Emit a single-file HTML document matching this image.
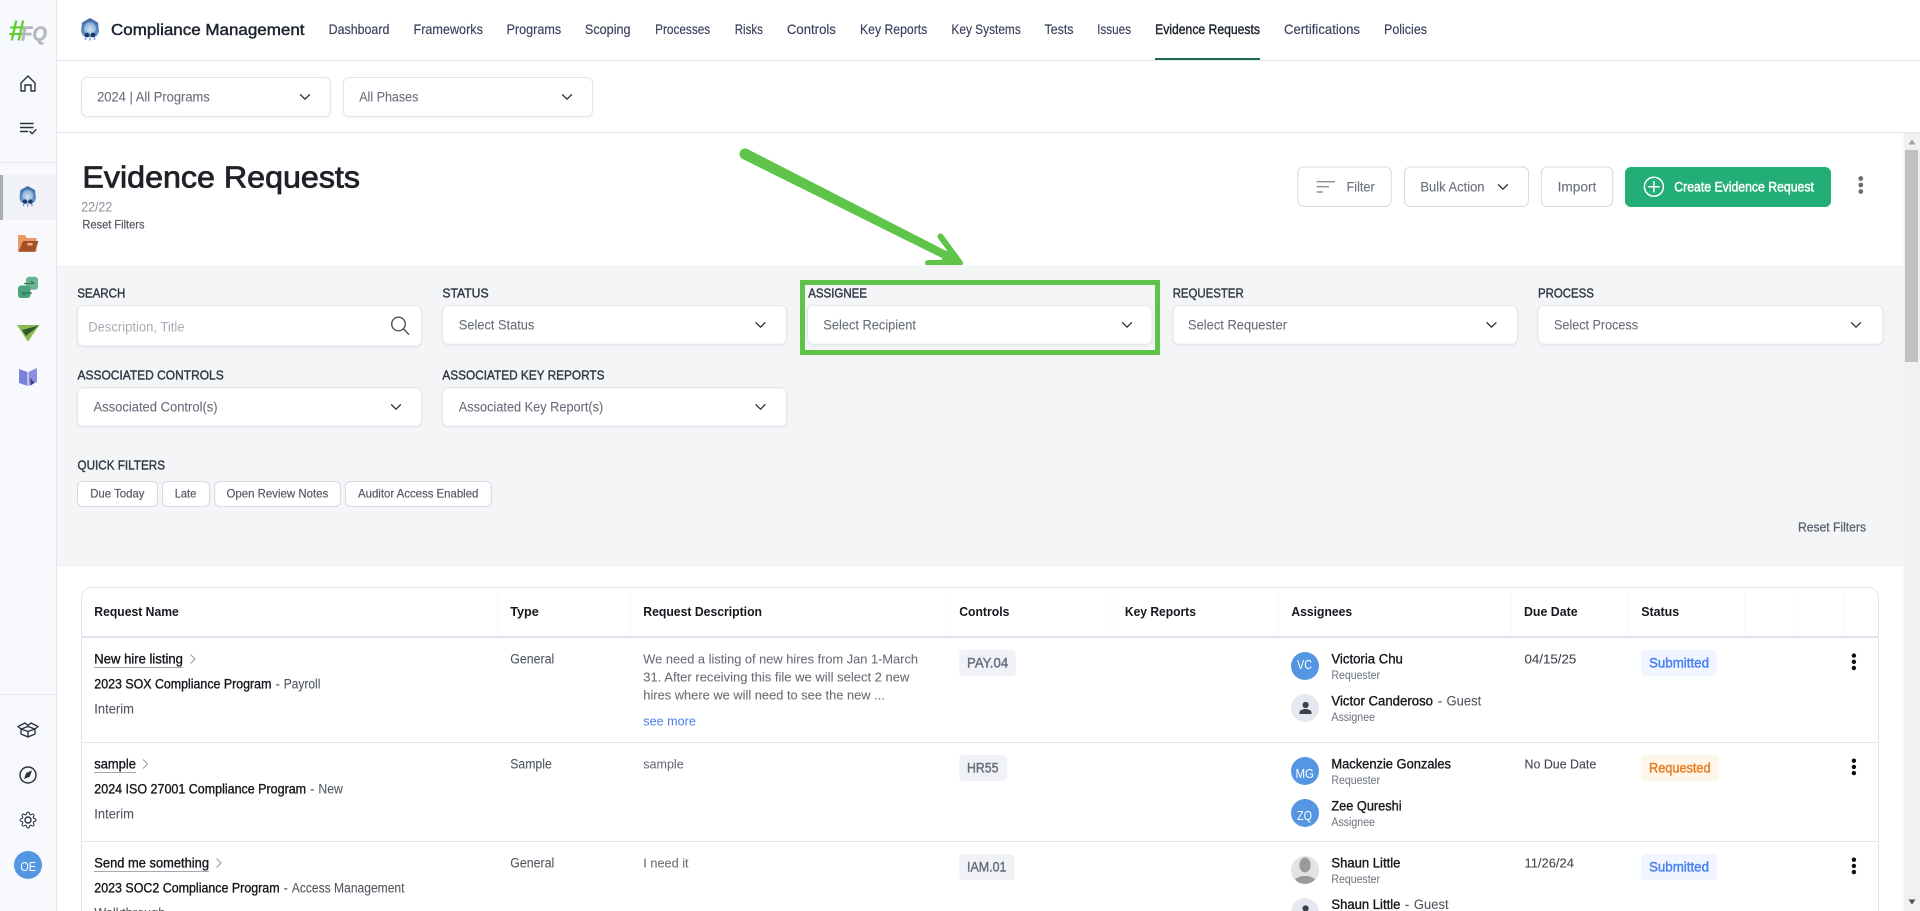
<!DOCTYPE html>
<html lang="en">
<head>
<meta charset="utf-8">
<title>Evidence Requests</title>
<style>
html,body{margin:0;padding:0;background:#fff;overflow:hidden}
svg{display:block}
text{font-family:"Liberation Sans",sans-serif;white-space:pre}
.nav{font-size:14px;fill:#3a405c;stroke:#3a405c;stroke-width:.15}
.sel{font-size:13.5px;fill:#686e7b;stroke:#686e7b;stroke-width:.1}
.lab{font-size:13px;fill:#333846;stroke:#333846;stroke-width:.4}
.chip{font-size:12px;fill:#555b67;stroke:#555b67;stroke-width:.2}
.th{font-size:13px;font-weight:bold;fill:#15181d}
.nm{font-size:13.5px;fill:#14171c;stroke:#14171c;stroke-width:.35}
.sub{font-size:13.5px;fill:#50565f;stroke:#50565f;stroke-width:.08}
.ds{font-size:13px;fill:#696e76;stroke:#696e76;stroke-width:.08}
.role{font-size:11.5px;fill:#747a84;stroke:#747a84;stroke-width:.08}
.pn{font-size:13px;fill:#3f454e;stroke:#3f454e;stroke-width:.1}
.cc{font-size:13.5px;fill:#666c7c;stroke:#666c7c;stroke-width:.4}
.av{font-size:13px;fill:#fff;text-anchor:start}
.st{font-size:13.5px;stroke-width:.45}
.box{fill:#fff;stroke:#e2e5ef;stroke-width:1;filter:drop-shadow(0 1px 1px rgba(60,70,110,.07))}
.chv{fill:none;stroke:#2c303a;stroke-width:1.35;stroke-linecap:round;stroke-linejoin:round}
.ic{fill:none;stroke:#2a3040;stroke-width:1.4;stroke-linecap:round;stroke-linejoin:round}
</style>
</head>
<body>
<svg xmlns="http://www.w3.org/2000/svg" width="1920" height="911" viewBox="0 0 1920 911">
<defs>
<path id="chev" class="chv" d="M-4.5-2 0 2.5 4.5-2"/>
<linearGradient id="sh" x1="0" y1="0" x2="0" y2="1"><stop offset="0" stop-color="#3c6aa2"/><stop offset="1" stop-color="#6f9bcc"/></linearGradient>
<radialGradient id="shc" cx=".5" cy=".6" r=".6"><stop offset="0" stop-color="#d5e4f5"/><stop offset="1" stop-color="#7ea6d4"/></radialGradient>
<g id="shield">
<path d="M10 0 18 4.500 19 13Q18 19 13.500 19H6.500Q2 19 1 13L2 4.500Z" fill="url(#sh)"/>
<ellipse cx="10" cy="10.500" rx="6" ry="6.500" fill="url(#shc)"/>
<path d="M5.500 19.500v2.500M10 19.500v3M14.500 19.500v2.500" stroke="#6f9bcf" stroke-width="1.400" fill="none"/>
<circle cx="7" cy="17" r="2.400" fill="#1d3a66"/><circle cx="13" cy="17" r="2.400" fill="#1d3a66"/>
</g>
<g id="kebab"><circle cx="0" cy="0" r="2.2"/><circle cx="0" cy="6.2" r="2.2"/><circle cx="0" cy="12.4" r="2.2"/></g>
<path id="rchev" d="M-2 -4.5 2.5 0 -2 4.5" fill="none" stroke="#9a9ea6" stroke-width="1.1"/>
<clipPath id="shaunclip"><circle cx="1305" cy="870" r="14"/></clipPath>
</defs>

<!-- Page -->
<rect width="1920" height="911" fill="#fff"/>

<!-- Sidebar -->
<rect x="0" y="0" width="56" height="911" fill="#f8f9fc"/>
<rect x="56" y="0" width="1" height="911" fill="#e4e7ef"/>
<text x="8.500" y="40.700" font-size="29" font-weight="bold" font-style="italic" fill="#5fcf2f" textLength="17" lengthAdjust="spacingAndGlyphs">#</text>
<text x="21" y="40.700" font-size="20" font-weight="bold" font-style="italic" fill="#b5b8be" stroke="#b5b8be" stroke-width=".5" textLength="26" lengthAdjust="spacingAndGlyphs">FQ</text>
<path class="ic" d="M21 83 28 76 35 83V91H31V85H25V91H21Z"/>
<path class="ic" d="M20.5 123.5H33M20.5 127.5H33M20.5 131.5H27.5M30 131.5l2.2 2.2 3.8-4"/>
<rect x="0" y="162" width="56" height="1" fill="#e4e7ef"/>
<rect x="0" y="175" width="56" height="45" fill="#f0f2f8"/>
<rect x="0" y="175" width="3" height="45" fill="#a9aeba"/>
<use href="#shield" transform="translate(18.5 186) scale(.92)"/>
<path d="M18 235h7l2 3h9.5v13.7H18Z" fill="#ea9a66"/>
<path d="M23 241H38.5L35 251.7H18.5Z" fill="#a6502a"/>
<rect x="27.5" y="243" width="5" height="2.5" fill="#f0b78f"/>
<rect x="26" y="276.7" width="12" height="13" rx="3" fill="#6cb590"/>
<rect x="18" y="285.5" width="12.5" height="12.5" rx="3" fill="#4aa37a"/>
<path d="M24 283.5H34M31 281l3 2.5M22 293H32M22 293l3 2.5" stroke="#2d7a55" stroke-width="1.2" fill="none"/>
<path d="M17 325H39.3L28 341.7Z" fill="#8fb950"/>
<path d="M22 330 39 325.5 26 336Z" fill="#2a5a2e"/>
<path d="M19 369 27.5 372V386L19 383Z" fill="#7d82d8"/>
<path d="M28.5 372 37 368V382L28.5 386Z" fill="#8a8fe0"/>
<path d="M30 378l4.5 4.5-3.5 3Z" fill="#3e3f80"/>
<rect x="0" y="694" width="56" height="1" fill="#e4e7ef"/>
<path class="ic" d="M28 726.5 35 729V734L28 737 21 734V729ZM28 731.5V737M21 729 28 731.5 35 729M21 729 18 726.5 25 723 28 725.5 31 723 38 726.5 35 729"/>
<circle class="ic" cx="28" cy="775" r="8"/>
<path d="M32 770.5 29.8 776.8 24 779 26.2 773Z" fill="#2a3040"/>
<path class="ic" transform="translate(19.4 811.4) scale(.72)" stroke-width="2" d="M19.4 15a1.65 1.65 0 0 0 .33 1.82l.06.06a2 2 0 0 1 0 2.83 2 2 0 0 1-2.83 0l-.06-.06a1.65 1.65 0 0 0-1.82-.33 1.65 1.65 0 0 0-1 1.51V21a2 2 0 0 1-2 2 2 2 0 0 1-2-2v-.09A1.65 1.65 0 0 0 9 19.4a1.65 1.65 0 0 0-1.82.33l-.06.06a2 2 0 0 1-2.83 0 2 2 0 0 1 0-2.83l.06-.06a1.65 1.65 0 0 0 .33-1.82 1.65 1.65 0 0 0-1.51-1H3a2 2 0 0 1-2-2 2 2 0 0 1 2-2h.09A1.65 1.65 0 0 0 4.6 9a1.65 1.65 0 0 0-.33-1.82l-.06-.06a2 2 0 0 1 0-2.83 2 2 0 0 1 2.83 0l.06.06a1.65 1.65 0 0 0 1.82.33H9a1.65 1.65 0 0 0 1-1.51V3a2 2 0 0 1 2-2 2 2 0 0 1 2 2v.09a1.65 1.65 0 0 0 1 1.51 1.65 1.65 0 0 0 1.82-.33l.06-.06a2 2 0 0 1 2.83 0 2 2 0 0 1 0 2.83l-.06.06a1.65 1.65 0 0 0-.33 1.82V9a1.65 1.65 0 0 0 1.51 1H21a2 2 0 0 1 2 2 2 2 0 0 1-2 2h-.09a1.65 1.65 0 0 0-1.51 1z"/>
<circle class="ic" cx="28" cy="820" r="3"/>
<circle cx="28" cy="865" r="14" fill="#5596e3"/>
<text class="av" x="20.4" y="871" textLength="15.6" lengthAdjust="spacingAndGlyphs">OE</text>

<!-- Top bar -->
<rect x="57" y="60" width="1863" height="1" fill="#e4e7ef"/>
<use href="#shield" transform="translate(80 18)"/>
<text x="111" y="35" font-size="15.5" fill="#1e2430" stroke="#1e2430" stroke-width=".45" textLength="193.5" lengthAdjust="spacingAndGlyphs">Compliance Management</text>
<text class="nav" x="328.6" y="34" textLength="60.8" lengthAdjust="spacingAndGlyphs">Dashboard</text>
<text class="nav" x="413.5" y="34" textLength="69.4" lengthAdjust="spacingAndGlyphs">Frameworks</text>
<text class="nav" x="506.5" y="34" textLength="54.7" lengthAdjust="spacingAndGlyphs">Programs</text>
<text class="nav" x="584.9" y="34" textLength="45.7" lengthAdjust="spacingAndGlyphs">Scoping</text>
<text class="nav" x="655.1" y="34" textLength="55.1" lengthAdjust="spacingAndGlyphs">Processes</text>
<text class="nav" x="734.7" y="34" textLength="28.2" lengthAdjust="spacingAndGlyphs">Risks</text>
<text class="nav" x="786.9" y="34" textLength="49" lengthAdjust="spacingAndGlyphs">Controls</text>
<text class="nav" x="860" y="34" textLength="67.3" lengthAdjust="spacingAndGlyphs">Key Reports</text>
<text class="nav" x="951.4" y="34" textLength="69.4" lengthAdjust="spacingAndGlyphs">Key Systems</text>
<text class="nav" x="1044.5" y="34" textLength="29" lengthAdjust="spacingAndGlyphs">Tests</text>
<text class="nav" x="1097.1" y="34" textLength="33.9" lengthAdjust="spacingAndGlyphs">Issues</text>
<text class="nav" x="1155.1" y="34" textLength="104.9" lengthAdjust="spacingAndGlyphs" style="fill:#1e2430;stroke:#1e2430;stroke-width:.4">Evidence Requests</text>
<text class="nav" x="1284" y="34" textLength="76" lengthAdjust="spacingAndGlyphs">Certifications</text>
<text class="nav" x="1384" y="34" textLength="43" lengthAdjust="spacingAndGlyphs">Policies</text>
<rect x="1155" y="58" width="105" height="2" fill="#1d6a50"/>

<!-- Program / phase bar -->
<rect class="box" x="81.5" y="77.5" width="249" height="39" rx="6"/>
<text class="sel" x="97.1" y="101.5" textLength="112.7" lengthAdjust="spacingAndGlyphs">2024 | All Programs</text>
<use href="#chev" x="305" y="96.7"/>
<rect class="box" x="343.5" y="77.5" width="249" height="39" rx="6"/>
<text class="sel" x="359.2" y="101.5" textLength="59.2" lengthAdjust="spacingAndGlyphs">All Phases</text>
<use href="#chev" x="567" y="96.7"/>
<rect x="57" y="132" width="1863" height="1" fill="#e4e7ef"/>

<!-- Title block -->
<text x="82.4" y="187.7" font-size="30.5" fill="#1e2228" stroke="#1e2228" stroke-width=".8" textLength="277.6" lengthAdjust="spacingAndGlyphs">Evidence Requests</text>
<text x="81.2" y="211.7" font-size="13.5" fill="#8a8f99" textLength="31" lengthAdjust="spacingAndGlyphs">22/22</text>
<text x="82.4" y="228.7" font-size="12" fill="#555c66" stroke="#555c66" stroke-width=".25" textLength="62.1" lengthAdjust="spacingAndGlyphs">Reset Filters</text>

<!-- Action buttons -->
<rect x="1297.8" y="167" width="93.4" height="39.5" rx="6" fill="#fff" stroke="#d5d9e6"/>
<path d="M1316.7 181.7H1335M1316.7 186.7H1329M1316.7 192H1323" stroke="#8a8f99" stroke-width="1.4" fill="none"/>
<text class="sel" x="1346.5" y="191.3" textLength="28.2" lengthAdjust="spacingAndGlyphs">Filter</text>
<rect x="1404.5" y="167" width="124" height="39.5" rx="6" fill="#fff" stroke="#d5d9e6"/>
<text class="sel" x="1420.4" y="191.5" textLength="64.1" lengthAdjust="spacingAndGlyphs">Bulk Action</text>
<use href="#chev" x="1502.9" y="186.7"/>
<rect x="1541.3" y="167" width="71.4" height="39.5" rx="6" fill="#fff" stroke="#d5d9e6"/>
<text class="sel" x="1557.6" y="191.3" textLength="38.7" lengthAdjust="spacingAndGlyphs">Import</text>
<rect x="1625" y="167" width="206" height="40" rx="6" fill="#22ae76"/>
<circle cx="1653.9" cy="186.7" r="9.5" fill="none" stroke="#fff" stroke-width="1.5"/>
<path d="M1653.9 181V192.4M1648.2 186.7H1659.6" stroke="#fff" stroke-width="1.5"/>
<text x="1674.3" y="191.3" font-size="13.5" fill="#fff" stroke="#fff" stroke-width=".45" textLength="139.6" lengthAdjust="spacingAndGlyphs">Create Evidence Request</text>
<g fill="#6b7078"><circle cx="1860.8" cy="178.5" r="2.4"/><circle cx="1860.8" cy="185" r="2.4"/><circle cx="1860.8" cy="191.5" r="2.4"/></g>

<!-- Annotation arrow -->
<circle cx="745" cy="154" r="5.5" fill="#5fc44a"/>
<path d="M747.5 149.1 742.5 158.9 956 265 960 258Z" fill="#5fc44a"/>
<path d="M940.500 236.500 960 263M928 263H960" stroke="#5fc44a" stroke-width="6" stroke-linecap="round" fill="none"/>
<path d="M948 250 962 265H938Z" fill="#5fc44a"/>

<!-- Filter panel -->
<rect x="57" y="265" width="1846.5" height="301.5" fill="#f4f5f7"/>
<text class="lab" x="77.2" y="297.3" textLength="48.1" lengthAdjust="spacingAndGlyphs">SEARCH</text>
<text class="lab" x="442.4" y="297.3" textLength="46.2" lengthAdjust="spacingAndGlyphs">STATUS</text>
<text class="lab" x="808.2" y="297.3" textLength="58.8" lengthAdjust="spacingAndGlyphs">ASSIGNEE</text>
<text class="lab" x="1172.7" y="297.3" textLength="71" lengthAdjust="spacingAndGlyphs">REQUESTER</text>
<text class="lab" x="1538" y="297.3" textLength="55.9" lengthAdjust="spacingAndGlyphs">PROCESS</text>

<rect class="box" x="77.5" y="305.5" width="344" height="40.5" rx="6"/>
<text x="88.2" y="331.5" font-size="13.5" fill="#a9adb8" textLength="96.3" lengthAdjust="spacingAndGlyphs">Description, Title</text>
<circle cx="398.5" cy="324" r="6.8" fill="none" stroke="#4a4f58" stroke-width="1.4"/>
<path d="M403.5 329 409 334.5" stroke="#4a4f58" stroke-width="1.4"/>

<rect class="box" x="442.5" y="305.5" width="344" height="38.7" rx="6"/>
<text class="sel" x="458.8" y="329.5" textLength="75.5" lengthAdjust="spacingAndGlyphs">Select Status</text>
<use href="#chev" x="760.5" y="324.7"/>
<rect class="box" x="807.5" y="305.5" width="344.5" height="38.7" rx="6"/>
<text class="sel" x="823.3" y="329.5" textLength="92.7" lengthAdjust="spacingAndGlyphs">Select Recipient</text>
<use href="#chev" x="1127" y="324.7"/>
<rect class="box" x="1173" y="305.5" width="344.5" height="38.7" rx="6"/>
<text class="sel" x="1188" y="329.5" textLength="99" lengthAdjust="spacingAndGlyphs">Select Requester</text>
<use href="#chev" x="1491.5" y="324.7"/>
<rect class="box" x="1538" y="305.5" width="345" height="38.7" rx="6"/>
<text class="sel" x="1554" y="329.5" textLength="84" lengthAdjust="spacingAndGlyphs">Select Process</text>
<use href="#chev" x="1856" y="324.7"/>

<rect x="802.5" y="282.5" width="355" height="70" fill="none" stroke="#5fc24a" stroke-width="5"/>

<text class="lab" x="77.5" y="379.3" textLength="146.2" lengthAdjust="spacingAndGlyphs">ASSOCIATED CONTROLS</text>
<text class="lab" x="442.4" y="379.3" textLength="162.1" lengthAdjust="spacingAndGlyphs">ASSOCIATED KEY REPORTS</text>
<rect class="box" x="77.5" y="387.7" width="344" height="38.5" rx="6"/>
<text class="sel" x="93.5" y="411.3" textLength="124.1" lengthAdjust="spacingAndGlyphs">Associated Control(s)</text>
<use href="#chev" x="396" y="406.7"/>
<rect class="box" x="442.5" y="387.7" width="344" height="38.5" rx="6"/>
<text class="sel" x="458.8" y="411.3" textLength="144.5" lengthAdjust="spacingAndGlyphs">Associated Key Report(s)</text>
<use href="#chev" x="760.5" y="406.7"/>

<text class="lab" x="77.5" y="469.3" textLength="87.5" lengthAdjust="spacingAndGlyphs">QUICK FILTERS</text>
<g fill="#fff" stroke="#d5d9e6">
<rect x="77.5" y="481.5" width="80" height="25" rx="5"/>
<rect x="162.5" y="481.5" width="47" height="25" rx="5"/>
<rect x="214.7" y="481.5" width="125.7" height="25" rx="5"/>
<rect x="345.3" y="481.5" width="146" height="25" rx="5"/>
</g>
<text class="chip" x="90.2" y="497.3" textLength="54.3" lengthAdjust="spacingAndGlyphs">Due Today</text>
<text class="chip" x="174.7" y="497.3" textLength="21.6" lengthAdjust="spacingAndGlyphs">Late</text>
<text class="chip" x="226.5" y="497.3" textLength="101.7" lengthAdjust="spacingAndGlyphs">Open Review Notes</text>
<text class="chip" x="358" y="497.3" textLength="120.4" lengthAdjust="spacingAndGlyphs">Auditor Access Enabled</text>
<text x="1798" y="531.7" font-size="12.5" fill="#5a606c" stroke="#5a606c" stroke-width=".25" textLength="68" lengthAdjust="spacingAndGlyphs">Reset Filters</text>

<!-- Table frame -->
<path d="M81.5 920V597.5a10 10 0 0 1 10-10H1868.5a10 10 0 0 1 10 10V920" fill="#fff" stroke="#e4e7ef"/>
<path d="M497 590V636M630.6 590V636M947 590V636M1112 590V636M1279 590V636M1511.4 590V636M1628 590V636M1744.5 590V636M1794.3 590V636M1844.5 590V636" stroke="#f9f9fb"/>
<rect x="82" y="636" width="1796" height="2" fill="#e0e3ee"/>
<rect x="82" y="742" width="1796" height="1" fill="#e4e7ef"/>
<rect x="82" y="841" width="1796" height="1" fill="#e4e7ef"/>

<!-- Table header -->
<text class="th" x="94.3" y="616" textLength="84.5" lengthAdjust="spacingAndGlyphs">Request Name</text>
<text class="th" x="510.2" y="616" textLength="28.6" lengthAdjust="spacingAndGlyphs">Type</text>
<text class="th" x="643.3" y="616" textLength="118.7" lengthAdjust="spacingAndGlyphs">Request Description</text>
<text class="th" x="959.2" y="616" textLength="50.2" lengthAdjust="spacingAndGlyphs">Controls</text>
<text class="th" x="1124.9" y="616" textLength="71" lengthAdjust="spacingAndGlyphs">Key Reports</text>
<text class="th" x="1291.4" y="616" textLength="60.8" lengthAdjust="spacingAndGlyphs">Assignees</text>
<text class="th" x="1524" y="616" textLength="53.6" lengthAdjust="spacingAndGlyphs">Due Date</text>
<text class="th" x="1641.2" y="616" textLength="38" lengthAdjust="spacingAndGlyphs">Status</text>

<!-- Row 1 -->
<text class="nm" x="94.3" y="663.3" textLength="88.6" lengthAdjust="spacingAndGlyphs">New hire listing</text>
<rect x="94" y="667" width="89" height="1" fill="#a4a8b0"/>
<use href="#rchev" x="192.5" y="659"/>
<text class="nm" x="94.3" y="688.3" textLength="177.1" lengthAdjust="spacingAndGlyphs">2023 SOX Compliance Program</text>
<text class="sub" x="275.5" y="688.3">-</text>
<text class="sub" x="283.7" y="688.3" textLength="36.7" lengthAdjust="spacingAndGlyphs">Payroll</text>
<text class="sub" x="94.3" y="713.7" textLength="39.6" lengthAdjust="spacingAndGlyphs">Interim</text>
<text class="sub" x="510.2" y="663.3" textLength="44.1" lengthAdjust="spacingAndGlyphs">General</text>
<text class="ds" x="643.3" y="663.3" textLength="274.7" lengthAdjust="spacingAndGlyphs">We need a listing of new hires from Jan 1-March</text>
<text class="ds" x="643.3" y="681.3" textLength="266.1" lengthAdjust="spacingAndGlyphs">31. After receiving this file we will select 2 new</text>
<text class="ds" x="643.3" y="699.3" textLength="241.6" lengthAdjust="spacingAndGlyphs">hires where we will need to see the new ...</text>
<text x="643.3" y="725.3" font-size="13" fill="#4a7ff0" textLength="52.6" lengthAdjust="spacingAndGlyphs">see more</text>
<rect x="959.2" y="650" width="56.7" height="26" rx="4" fill="#f1f2f7"/>
<text class="cc" x="967" y="667.3" textLength="41.2" lengthAdjust="spacingAndGlyphs">PAY.04</text>
<circle cx="1305" cy="666" r="14" fill="#5596e3"/>
<text class="av" x="1297" y="669" textLength="15" lengthAdjust="spacingAndGlyphs">VC</text>
<text class="nm" x="1331.4" y="663.3" textLength="71.5" lengthAdjust="spacingAndGlyphs">Victoria Chu</text>
<text class="role" x="1331.4" y="679" textLength="48.6" lengthAdjust="spacingAndGlyphs">Requester</text>
<circle cx="1305" cy="708" r="14" fill="#e6e8f0"/>
<circle cx="1305.6" cy="705" r="3.1" fill="#3a4050"/>
<path d="M1299.5 714v-1.5c0-2.5 4-3.5 6-3.5s6 1 6 3.5v1.5z" fill="#3a4050"/>
<text class="nm" x="1331.4" y="705.3" textLength="101.6" lengthAdjust="spacingAndGlyphs">Victor Canderoso</text>
<text class="sub" x="1437.8" y="705.3">-</text>
<text class="sub" x="1446.5" y="705.3" textLength="34.7" lengthAdjust="spacingAndGlyphs">Guest</text>
<text class="role" x="1331.4" y="721" textLength="43.6" lengthAdjust="spacingAndGlyphs">Assignee</text>
<text class="pn" x="1524.5" y="663.3" textLength="51.8" lengthAdjust="spacingAndGlyphs">04/15/25</text>
<rect x="1640.8" y="650" width="76.2" height="26" rx="4" fill="#f0f5ff"/>
<text class="st" x="1649" y="667.3" textLength="60" lengthAdjust="spacingAndGlyphs" fill="#4a80f0" stroke="#4a80f0">Submitted</text>
<use href="#kebab" x="1853.9" y="655.6" fill="#0e1014"/>

<!-- Row 2 -->
<text class="nm" x="94.3" y="768.3" textLength="41.6" lengthAdjust="spacingAndGlyphs">sample</text>
<rect x="94" y="772" width="42" height="1" fill="#a4a8b0"/>
<use href="#rchev" x="145" y="764"/>
<text class="nm" x="94.3" y="793.3" textLength="211.8" lengthAdjust="spacingAndGlyphs">2024 ISO 27001 Compliance Program</text>
<text class="sub" x="310" y="793.3">-</text>
<text class="sub" x="318.4" y="793.3" textLength="24.5" lengthAdjust="spacingAndGlyphs">New</text>
<text class="sub" x="94.3" y="818.7" textLength="39.6" lengthAdjust="spacingAndGlyphs">Interim</text>
<text class="sub" x="510.2" y="768.3" textLength="41.6" lengthAdjust="spacingAndGlyphs">Sample</text>
<text class="ds" x="643.3" y="768.7" textLength="40.4" lengthAdjust="spacingAndGlyphs">sample</text>
<rect x="959.2" y="755" width="47.8" height="26" rx="4" fill="#f1f2f7"/>
<text class="cc" x="967" y="772.3" textLength="31.4" lengthAdjust="spacingAndGlyphs">HR55</text>
<circle cx="1305" cy="771" r="14" fill="#5596e3"/>
<text class="av" x="1295.5" y="778" textLength="18.5" lengthAdjust="spacingAndGlyphs">MG</text>
<text class="nm" x="1331.4" y="768.3" textLength="119.6" lengthAdjust="spacingAndGlyphs">Mackenzie Gonzales</text>
<text class="role" x="1331.4" y="784" textLength="48.6" lengthAdjust="spacingAndGlyphs">Requester</text>
<circle cx="1305" cy="813" r="14" fill="#5596e3"/>
<text class="av" x="1297" y="820" textLength="15" lengthAdjust="spacingAndGlyphs">ZQ</text>
<text class="nm" x="1331.4" y="810.3" textLength="70.2" lengthAdjust="spacingAndGlyphs">Zee Qureshi</text>
<text class="role" x="1331.4" y="826" textLength="43.6" lengthAdjust="spacingAndGlyphs">Assignee</text>
<text class="pn" x="1524.5" y="768.3" textLength="71.8" lengthAdjust="spacingAndGlyphs">No Due Date</text>
<rect x="1640.8" y="755" width="78.4" height="26" rx="4" fill="#fff6ea"/>
<text class="st" x="1649" y="772.3" textLength="61.6" lengthAdjust="spacingAndGlyphs" fill="#e67e22" stroke="#e67e22">Requested</text>
<use href="#kebab" x="1853.9" y="760.7" fill="#0e1014"/>

<!-- Row 3 -->
<text class="nm" x="94.3" y="867.3" textLength="114.7" lengthAdjust="spacingAndGlyphs">Send me something</text>
<rect x="94" y="871" width="115" height="1" fill="#a4a8b0"/>
<use href="#rchev" x="218.5" y="863"/>
<text class="nm" x="94.3" y="892.3" textLength="185.3" lengthAdjust="spacingAndGlyphs">2023 SOC2 Compliance Program</text>
<text class="sub" x="283.5" y="892.3">-</text>
<text class="sub" x="291.8" y="892.3" textLength="112.7" lengthAdjust="spacingAndGlyphs">Access Management</text>
<text class="sub" x="94.3" y="917.7" textLength="71" lengthAdjust="spacingAndGlyphs">Walkthrough</text>
<text class="sub" x="510.2" y="867.3" textLength="44.1" lengthAdjust="spacingAndGlyphs">General</text>
<text class="ds" x="643.3" y="867.3" textLength="45.3" lengthAdjust="spacingAndGlyphs">I need it</text>
<rect x="959.2" y="854" width="55.5" height="26" rx="4" fill="#f1f2f7"/>
<text class="cc" x="967" y="871.3" textLength="39.5" lengthAdjust="spacingAndGlyphs">IAM.01</text>
<circle cx="1305" cy="870" r="14" fill="#e2e4e2"/>
<g clip-path="url(#shaunclip)" fill="#999b9b">
<ellipse cx="1305" cy="865" rx="5.6" ry="7.5"/>
<path d="M1293 885c0-6 4-7.500 9-9h6c5 1.500 9 3 9 9z"/>
</g>
<text class="nm" x="1331.4" y="867.3" textLength="69" lengthAdjust="spacingAndGlyphs">Shaun Little</text>
<text class="role" x="1331.4" y="883" textLength="48.6" lengthAdjust="spacingAndGlyphs">Requester</text>
<circle cx="1305" cy="912" r="14" fill="#e6e8f0"/>
<circle cx="1305.6" cy="908.500" r="3.1" fill="#3a4050"/>
<text class="nm" x="1331.4" y="909" textLength="69" lengthAdjust="spacingAndGlyphs">Shaun Little</text>
<text class="sub" x="1404.800" y="909">-</text>
<text class="sub" x="1413.9" y="909" textLength="34.7" lengthAdjust="spacingAndGlyphs">Guest</text>
<text class="pn" x="1524.5" y="867.3" textLength="49.4" lengthAdjust="spacingAndGlyphs">11/26/24</text>
<rect x="1640.8" y="854" width="76.2" height="26" rx="4" fill="#f0f5ff"/>
<text class="st" x="1649" y="871.3" textLength="60" lengthAdjust="spacingAndGlyphs" fill="#4a80f0" stroke="#4a80f0">Submitted</text>
<use href="#kebab" x="1853.9" y="859.7" fill="#0e1014"/>

<!-- Scrollbar -->
<rect x="1903.5" y="133" width="16.5" height="778" fill="#f1f1f1"/>
<rect x="1905" y="150" width="13" height="212" fill="#c1c1c1"/>
<path d="M1908.500 144.500 1912 139.500 1915.500 144.500Z" fill="#a3a3a3"/>
<path d="M1908.500 899.500 1912 904.500 1915.500 899.500Z" fill="#505050"/>
</svg>
</body>
</html>
